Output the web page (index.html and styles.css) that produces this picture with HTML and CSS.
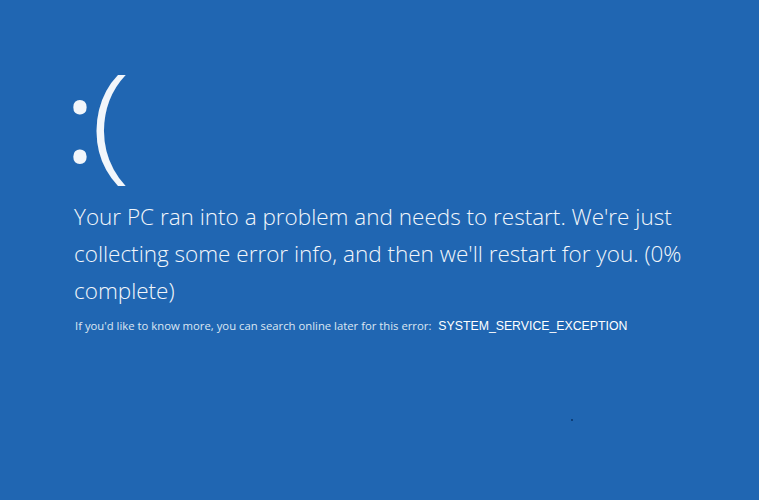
FILE: index.html
```html
<!DOCTYPE html>
<html lang="en">
<head>
    <meta charset="UTF-8">
    <title>Your PC ran into a problem</title>
    <link rel="stylesheet" href="styles.css">
</head>
<body>

<div class="screen">
    <div class="face"><span class="eyes">:</span><span class="mouth">(</span></div>

    <p class="message">Your PC ran into a problem and needs to restart. We're just collecting some error info, and then we'll restart for you. (0% complete)</p>

    <p class="details">
        If you'd like to know more, you can search online later for this error:
        <span class="code">SYSTEM_SERVICE_EXCEPTION</span>
    </p>

    <div class="cursor"></div>
</div>

</body>
</html>
```

FILE: styles.css
```css
body {
    margin: 0;
    background-color: #2066b2;
    color: #f2f6fb;
    font-family: "Open Sans", "Noto Sans", sans-serif;
}
.screen {
    position: relative;
    height: 500px;
    padding: 42px 0 0 70px;
    box-sizing: border-box;
}
.face {
    height: 150px;
    margin-left: -5px;
    font-weight: 300;
    line-height: 150px;
}
.eyes {
    font-size: 114px;
    font-weight: 400;
    letter-spacing: -6px;
    vertical-align: 9px;
}
.mouth {
    display: inline-block;
    margin-left: 4px;
    font-size: 128px;
    vertical-align: 5px;
    transform: scaleX(1.15);
}
.message {
    margin: 6px 0 0 4px;
    max-width: 640px;
    font-size: 22.5px;
    font-weight: 300;
    line-height: 37px;
}
.details {
    margin: 9px 0 0 5px;
    font-size: 11.3px;
    color: #dce6f3;
}
.code {
    margin-left: 4px;
    font-family: "Liberation Sans", Arial, sans-serif;
    font-size: 12.3px;
    color: #ffffff;
}
.cursor {
    position: absolute;
    left: 571px;
    top: 419px;
    width: 2px;
    height: 2px;
    background: #0d3f7a;
}
```
